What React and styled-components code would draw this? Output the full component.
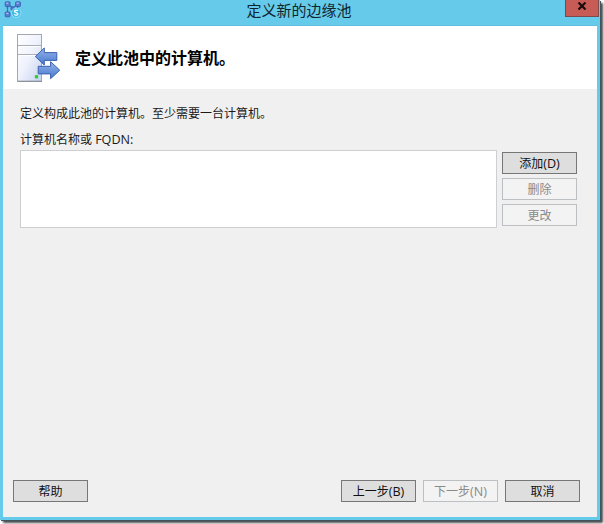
import React from 'react';
import styled, { createGlobalStyle } from 'styled-components';

const GlobalStyle = createGlobalStyle`
  * {
    box-sizing: border-box;
  }

  body {
    margin: 0;
    overflow: hidden;
    background: #fff;
    font-family: 'Open Sans', 'Noto Sans CJK SC', sans-serif;
  }
`;

const Desktop = styled.div`
  width: 604px;
  height: 524px;
  padding: 0 4px 4px 0;
  overflow: hidden;
`;

const Window = styled.div`
  display: flex;
  flex-direction: column;
  width: 600px;
  height: 520px;
  padding: 0 3px 3px;
  background: #66caea;
  box-shadow: 1px 1px 0 #3d565f, 3px 3px 2px 0 rgba(0, 0, 0, 0.7);
`;

const TitleBar = styled.header`
  display: grid;
  grid-template-columns: 40px 1fr 40px;
  height: 26px;
  flex: none;
  border-bottom: 1px solid #62bfdd;
`;

const Title = styled.h1`
  margin: 0 1px 0 -1px;
  text-align: center;
  font-size: 15px;
  font-weight: normal;
  line-height: 21px;
  color: #10262e;
`;

const CloseButton = styled.button`
  display: flex;
  justify-content: center;
  align-items: center;
  width: 34px;
  height: 17px;
  margin-left: 8px;
  padding: 0 0 4px;
  border: 1px solid #7c4a4b;
  border-top: 0;
  background: #c75b56;
`;

const Banner = styled.div`
  display: flex;
  align-items: center;
  gap: 13px;
  height: 63px;
  flex: none;
  padding-left: 13px;
  background: #fff;
`;

const Heading = styled.h2`
  margin: 0;
  font-size: 16px;
  font-weight: bold;
  line-height: 24px;
  color: #000;
`;

const Content = styled.main`
  display: flex;
  flex-direction: column;
  flex: 1;
  padding: 15px 20px 15px 17px;
  background: #f0f0f0;
`;

const Text = styled.p`
  margin: 0 0 6px;
  font-size: 12px;
  line-height: 20px;
  color: #1a1a1a;
  white-space: nowrap;
`;

const Label = styled(Text)`
  margin-bottom: 0;
`;

const Latin = styled.span`
  font-size: 12.6px;
  line-height: 1;
`;

const ListRow = styled.div`
  display: flex;
  gap: 5px;
`;

const ListBox = styled.div`
  width: 477px;
  height: 78px;
  border: 1px solid #cdcfd2;
  background: #fff;
`;

const ButtonColumn = styled.div`
  display: flex;
  flex-direction: column;
  gap: 4px;
  padding-top: 2px;
`;

const Button = styled.button`
  width: 75px;
  height: 22px;
  padding: 1px 0 0;
  border: 1px solid ${({ disabled }) => (disabled ? '#bcc0c2' : '#777')};
  background: ${({ disabled }) => (disabled ? '#f3f3f3' : '#dedede')};
  color: ${({ disabled }) => (disabled ? '#8a8a8a' : '#111')};
  font-family: inherit;
  font-size: 12px;
  line-height: 19px;
  white-space: nowrap;
`;

const Footer = styled.footer`
  display: flex;
  justify-content: space-between;
  margin: auto -3px 0 -7px;
`;

const Steps = styled.div`
  display: flex;
  gap: 7px;
`;

const AppIconSvg = styled.svg`
  display: block;
  margin: 1px 0 0 1px;
`;

function AppIcon() {
  return (
    <AppIconSvg width="19" height="18" viewBox="0 0 19 18">
      <path d="M5 4l4 3l5-4M3.5 5v7M13.5 5v5" stroke="#3d70c0" strokeWidth="1.3" fill="none" />
      <g fill="#5a7fd2" stroke="#3558ae" strokeWidth="0.8">
        <rect x="1.2" y="0.8" width="4.8" height="4.8" rx="0.8" />
        <rect x="11.6" y="0.8" width="4.8" height="4.8" rx="0.8" />
        <rect x="1.2" y="11" width="4.8" height="4.8" rx="0.8" />
        <rect x="7" y="5.8" width="3" height="3.4" rx="0.8" />
      </g>
      <path d="M2.2 2.2h2.2M12.6 2.2h2.2M2.2 12.4h2.2" stroke="#a9c0f0" strokeWidth="1.2" />
      <circle cx="12.2" cy="11.8" r="4.7" fill="#35bdec" stroke="#a6e5f8" strokeWidth="0.8" />
      <path
        d="M14 9.9c-1-1-3.5-.9-3.5.5 0 1.4 3.5 1.1 3.5 2.7 0 1.4-2.8 1.5-3.8.3"
        fill="none"
        stroke="#fff"
        strokeWidth="1.3"
      />
    </AppIconSvg>
  );
}

// 服务器与双向箭头
function ServerIcon() {
  return (
    <svg width="46" height="52" viewBox="0 0 46 52">
      <defs>
        <linearGradient id="tower" x1="0" y1="0" x2="1" y2="1">
          <stop offset="0" stopColor="#fff" />
          <stop offset="0.5" stopColor="#eef2fc" />
          <stop offset="1" stopColor="#c6d1ef" />
        </linearGradient>
        <linearGradient id="arrow" x1="0" y1="0" x2="0" y2="1">
          <stop offset="0" stopColor="#94b4ec" />
          <stop offset="1" stopColor="#4878cc" />
        </linearGradient>
      </defs>
      <rect x="1.5" y="2.5" width="24" height="47" fill="url(#tower)" stroke="#a3a7b0" />
      <path d="M2 49.2h24" stroke="#858a94" />
      <path d="M2 13.5h23M2 22.5h23" stroke="#a9aeb8" />
      <path d="M2.7 14.6h21.5M2.7 23.6h21.5" stroke="#fff" />
      <rect x="18.8" y="43" width="3.4" height="3.4" rx="1" fill="#35cc35" />
      <g fill="url(#arrow)" stroke="#3a62b2" strokeLinejoin="round">
        <path d="M19.3 24.5L28.3 16v4.6h12.5v7.8H28.3v4.6z" />
        <path d="M43.8 38.2L34.6 29.7v4.6H22.2v7.6h12.4v4.8z" />
      </g>
    </svg>
  );
}

function App() {
  return (
    <>
      <GlobalStyle />
      <Desktop>
        <Window>
          <TitleBar>
            <AppIcon />
            <Title>定义新的边缘池</Title>
            <CloseButton aria-label="关闭">
              <svg width="10" height="8" viewBox="0 0 10 8">
                <path d="M1.5 0.5l7 7M8.5 0.5l-7 7" stroke="#1c0c0c" strokeWidth="2.2" />
              </svg>
            </CloseButton>
          </TitleBar>
          <Banner>
            <ServerIcon />
            <Heading>定义此池中的计算机。</Heading>
          </Banner>
          <Content>
            <Text>定义构成此池的计算机。至少需要一台计算机。</Text>
            <Label>
              计算机名称或 <Latin>FQDN:</Latin>
            </Label>
            <ListRow>
              <ListBox />
              <ButtonColumn>
                <Button>
                  添加<Latin>(D)</Latin>
                </Button>
                <Button disabled>删除</Button>
                <Button disabled>更改</Button>
              </ButtonColumn>
            </ListRow>
            <Footer>
              <Button>帮助</Button>
              <Steps>
                <Button>
                  上一步<Latin>(B)</Latin>
                </Button>
                <Button disabled>
                  下一步<Latin>(N)</Latin>
                </Button>
                <Button>取消</Button>
              </Steps>
            </Footer>
          </Content>
        </Window>
      </Desktop>
    </>
  );
}

export default App;
